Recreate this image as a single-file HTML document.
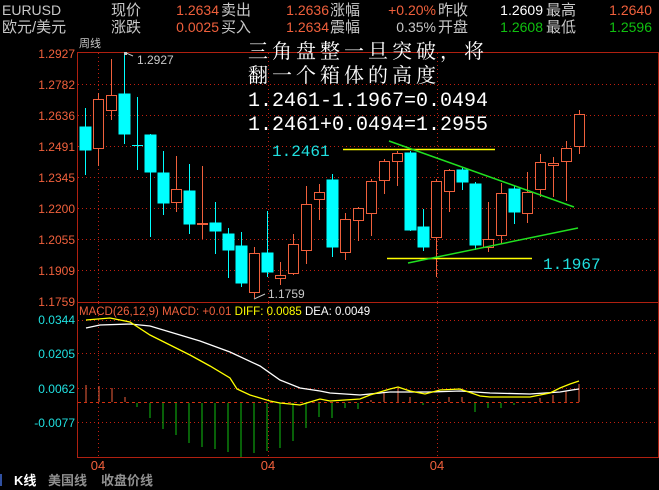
<!DOCTYPE html>
<html><head><meta charset="utf-8"><style>
html,body{margin:0;padding:0;background:#000;width:659px;height:490px;overflow:hidden}
svg{display:block}
text{font-family:"Liberation Sans","Noto Sans CJK SC",sans-serif}
.cj{font-family:"Liberation Sans","WenQuanYi Zen Hei","Noto Sans CJK SC",sans-serif}
.mono{font-family:"Liberation Mono",monospace}
.ser{font-family:"Liberation Serif","Noto Serif CJK SC",serif}
</style></head><body>
<svg width="659" height="490" viewBox="0 0 659 490" xmlns="http://www.w3.org/2000/svg">
<rect width="659" height="490" fill="#000"/>
<g font-size="15" class="cj">
<text x="2" y="15" fill="#c8c8c8" font-size="14">EURUSD</text>
<text x="2" y="32" fill="#c8c8c8">欧元/美元</text>
<text x="111" y="15" fill="#c8c8c8">现价</text>
<text x="111" y="32" fill="#c8c8c8">涨跌</text>
<text x="219" y="15" fill="#f0603c" text-anchor="end" font-size="14">1.2634</text>
<text x="219" y="32" fill="#f0603c" text-anchor="end" font-size="14">0.0025</text>
<text x="221" y="15" fill="#c8c8c8">卖出</text>
<text x="221" y="32" fill="#c8c8c8">买入</text>
<text x="329" y="15" fill="#f0603c" text-anchor="end" font-size="14">1.2636</text>
<text x="329" y="32" fill="#f0603c" text-anchor="end" font-size="14">1.2634</text>
<text x="330" y="15" fill="#c8c8c8">涨幅</text>
<text x="330" y="32" fill="#c8c8c8">震幅</text>
<text x="436" y="15" fill="#f0603c" text-anchor="end" font-size="14">+0.20%</text>
<text x="436" y="32" fill="#c8c8c8" text-anchor="end" font-size="14">0.35%</text>
<text x="438" y="15" fill="#c8c8c8">昨收</text>
<text x="438" y="32" fill="#c8c8c8">开盘</text>
<text x="543" y="15" fill="#fff" text-anchor="end" font-size="14">1.2609</text>
<text x="543" y="32" fill="#10c010" text-anchor="end" font-size="14">1.2608</text>
<text x="546" y="15" fill="#c8c8c8">最高</text>
<text x="546" y="32" fill="#c8c8c8">最低</text>
<text x="652" y="15" fill="#f0603c" text-anchor="end" font-size="14">1.2640</text>
<text x="652" y="32" fill="#10c010" text-anchor="end" font-size="14">1.2596</text>
</g>
<text x="79" y="47" fill="#c8c8c8" font-size="11" class="cj">周线</text>
<g stroke="#b02010" fill="none" stroke-width="1">
<path d="M77.5 52.5H658.5V457.5H77.5Z"/>
<path d="M77.5 302.5H658.5"/>
</g>
<g stroke="#c02010" stroke-dasharray="1 3" stroke-width="1">
<path d="M78 84.5H658M78 115.5H658M78 146.5H658M78 177.5H658M78 208.5H658M78 239.5H658M78 270.5H658"/>
<path d="M78 320.5H658M78 353.5H658M78 388.5H658M78 422.5H658"/>
<path d="M98.5 53V302M268.5 53V302M437.5 53V302M98.5 303V457M268.5 303V457M437.5 303V457"/>
</g>
<path d="M78 402.5H580" stroke="#d03010" stroke-dasharray="3 3"/>
<g font-size="12" fill="#f0603c" text-anchor="end">
<text x="75" y="58">1.2927</text><text x="75" y="89">1.2782</text><text x="75" y="120">1.2636</text>
<text x="75" y="151">1.2491</text><text x="75" y="182">1.2345</text><text x="75" y="213">1.2200</text>
<text x="75" y="244">1.2055</text><text x="75" y="275">1.1909</text><text x="75" y="306">1.1759</text>
</g>
<g font-size="12" fill="#20e0e0" text-anchor="end">
<text x="75" y="324">0.0344</text><text x="75" y="358">0.0205</text><text x="75" y="393">0.0062</text><text x="75" y="427">-0.0077</text>
</g>
<g stroke-width="1">
<g stroke="#00ffff" fill="#00ffff">
<line x1="85.5" y1="108" x2="85.5" y2="175"/><rect x="80" y="127" width="11" height="23"/>
<line x1="124.5" y1="53" x2="124.5" y2="144"/><rect x="119" y="94" width="11" height="40"/>
<line x1="137.5" y1="97" x2="137.5" y2="170"/><line x1="132" y1="145.5" x2="143" y2="145.5"/>
<line x1="150.5" y1="134" x2="150.5" y2="237"/><rect x="145" y="135" width="11" height="37"/>
<line x1="163.5" y1="151" x2="163.5" y2="215"/><rect x="158" y="173" width="11" height="30"/>
<line x1="189.5" y1="164" x2="189.5" y2="234"/><rect x="184" y="191" width="11" height="33"/>
<line x1="215.5" y1="202" x2="215.5" y2="254"/><rect x="210" y="223" width="11" height="8"/>
<line x1="228.5" y1="228" x2="228.5" y2="278"/><rect x="223" y="234" width="11" height="16"/>
<line x1="241.5" y1="232" x2="241.5" y2="287"/><rect x="236" y="246" width="11" height="37"/>
<line x1="267.5" y1="211" x2="267.5" y2="277"/><rect x="262" y="253" width="11" height="19"/>
<line x1="332.5" y1="174" x2="332.5" y2="257"/><rect x="327" y="180" width="11" height="67"/>
<line x1="410.5" y1="151" x2="410.5" y2="231"/><rect x="405" y="153" width="11" height="77"/>
<line x1="423.5" y1="209" x2="423.5" y2="251"/><rect x="418" y="227" width="11" height="20"/>
<line x1="462.5" y1="167" x2="462.5" y2="190"/><rect x="457" y="170" width="11" height="12"/>
<line x1="475.5" y1="182" x2="475.5" y2="250"/><rect x="470" y="184" width="11" height="61"/>
<line x1="514.5" y1="186" x2="514.5" y2="224"/><rect x="509" y="189" width="11" height="23"/>
</g>
<g stroke="#f0603c" fill="#000">
<line x1="98.5" y1="93" x2="98.5" y2="166"/><rect x="93.5" y="99.5" width="10" height="49"/>
<line x1="111.5" y1="59" x2="111.5" y2="120"/><rect x="106.5" y="95.5" width="10" height="15"/>
<line x1="176.5" y1="156" x2="176.5" y2="212"/><rect x="171.5" y="189.5" width="10" height="13"/>
<line x1="202.5" y1="166" x2="202.5" y2="239"/><rect x="197" y="223" width="11" height="2" fill="#f0603c" stroke="none"/>
<line x1="254.5" y1="247" x2="254.5" y2="298"/><rect x="249.5" y="253.5" width="10" height="39"/>
<line x1="280.5" y1="262" x2="280.5" y2="285"/><rect x="275.5" y="275.5" width="10" height="3"/>
<line x1="293.5" y1="234" x2="293.5" y2="275"/><rect x="288.5" y="244.5" width="10" height="29"/>
<line x1="306.5" y1="186" x2="306.5" y2="264"/><rect x="301.5" y="204.5" width="10" height="46"/>
<line x1="319.5" y1="184" x2="319.5" y2="220"/><rect x="314.5" y="192.5" width="10" height="7"/>
<line x1="345.5" y1="213" x2="345.5" y2="260"/><rect x="340.5" y="219.5" width="10" height="33"/>
<line x1="358.5" y1="207" x2="358.5" y2="241"/><rect x="353.5" y="208.5" width="10" height="12"/>
<line x1="371.5" y1="179" x2="371.5" y2="236"/><rect x="366.5" y="181.5" width="10" height="32"/>
<line x1="384.5" y1="159" x2="384.5" y2="194"/><rect x="379.5" y="161.5" width="10" height="19"/>
<line x1="397.5" y1="151" x2="397.5" y2="186"/><rect x="392.5" y="153.5" width="10" height="8"/>
<line x1="436.5" y1="179" x2="436.5" y2="277"/><rect x="431.5" y="181.5" width="10" height="56"/>
<line x1="449.5" y1="169" x2="449.5" y2="212"/><rect x="444.5" y="170.5" width="10" height="21"/>
<line x1="488.5" y1="202" x2="488.5" y2="252"/><rect x="483.5" y="239.5" width="10" height="8"/>
<line x1="501.5" y1="183" x2="501.5" y2="244"/><rect x="496.5" y="193.5" width="10" height="42"/>
<line x1="527.5" y1="172" x2="527.5" y2="223"/><rect x="522.5" y="192.5" width="10" height="21"/>
<line x1="540.5" y1="154" x2="540.5" y2="197"/><rect x="535.5" y="162.5" width="10" height="27"/>
<line x1="553.5" y1="157" x2="553.5" y2="197"/><rect x="548.5" y="163.5" width="10" height="2"/>
<line x1="566.5" y1="141" x2="566.5" y2="201"/><rect x="561.5" y="148.5" width="10" height="13"/>
<line x1="579.5" y1="110" x2="579.5" y2="154"/><rect x="574.5" y="114.5" width="10" height="32"/>
</g>
</g>
<path d="M125 52.5L133 56" stroke="#c8c8c8"/><rect x="124" y="52" width="3" height="3" fill="#c8c8c8"/>
<text x="137" y="64" fill="#c8c8c8" font-size="12">1.2927</text>
<path d="M254 299L265 294" stroke="#c8c8c8"/>
<text x="268" y="298" fill="#c8c8c8" font-size="12">1.1759</text>
<path d="M343 149.5H495M387 258.5H532" stroke="#ffff00" stroke-width="1.5"/>
<path d="M389 141L574 207M408 263L578 228" stroke="#20e020" stroke-width="1.5"/>
<text x="272" y="156" fill="#20e0e0" font-size="16" class="mono">1.2461</text>
<text x="543" y="269" fill="#20e0e0" font-size="16" class="mono">1.1967</text>
<g fill="#fff">
<text x="248" y="58" font-size="20" letter-spacing="4" class="ser">三角盘整一旦突破，将</text>
<text x="248" y="82" font-size="20" letter-spacing="4" class="ser">翻一个箱体的高度</text>
<text x="248" y="106" font-size="20" class="mono">1.2461-1.1967=0.0494</text>
<text x="248" y="130" font-size="20" class="mono">1.2461+0.0494=1.2955</text>
</g>
<text x="79" y="315" font-size="11.5"><tspan fill="#f0603c">MACD(26,12,9) MACD: +0.01 </tspan><tspan fill="#ffff00">DIFF: 0.0085 </tspan><tspan fill="#fff">DEA: 0.0049</tspan></text>
<g stroke="#f0603c" stroke-width="1">
<path d="M86 385V402M99 386V402M112 388V402M125 397V402M371 400V402M384 393V402M398 388V402M410 397V402M449 397V402M462 397V402M540 398V402M553 395V402M566 391V402M579 384V402"/>
</g>
<g stroke="#10c010" stroke-width="1">
<path d="M137 403V407M150 403V418M163 403V429M176 403V435M189 403V443M202 403V447M215 403V449M228 403V452M241 403V457M254 403V453M267 403V451M280 403V448M293 403V441M306 403V428M319 403V417M332 403V418M345 403V408M358 403V409M423 403V405M475 403V412M488 403V408M501 403V408M514 403V405"/>
</g>
<polyline fill="none" stroke="#fff" stroke-width="1.3" points="86,328 100,325 130,324 150,326 170,332 200,341 230,352 260,366 280,380 300,388 320,391 330,393 360,395 390,392 430,392 460,391 490,393 530,394 560,392 572,390 579,389"/>
<polyline fill="none" stroke="#ffff00" stroke-width="1.3" points="86,320 110,318 130,322 150,335 170,345 190,355 210,366 230,378 237,389 250,395 270,401 280,403 300,405 310,402 320,399 330,401 360,399 370,395 390,389 398,387 410,391 425,394 440,390 460,389 480,396 490,397 530,397 540,395 550,393 560,388 570,384 579,381"/>
<g font-size="13" fill="#f0603c" text-anchor="middle">
<text x="98" y="470">04</text><text x="268" y="470">04</text><text x="437" y="470">04</text>
</g>
<rect x="0" y="474" width="2" height="12" fill="#3050a0"/>
<g font-size="13" font-weight="bold" class="cj">
<text x="14" y="485" fill="#fff">K线</text>
<text x="48" y="485" fill="#909090">美国线</text>
<text x="101" y="485" fill="#909090">收盘价线</text>
</g>
</svg>
</body></html>
